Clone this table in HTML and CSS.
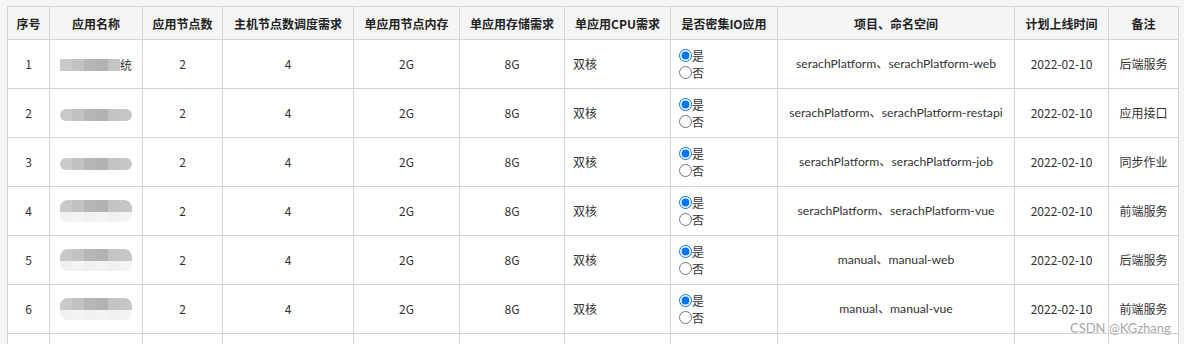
FILE: index.html
```html
<!DOCTYPE html>
<html lang="zh-CN">
<head>
<meta charset="utf-8">
<title>应用部署需求</title>
<link rel="stylesheet" href="styles.css">
</head>
<body>
<div class="page">
  <table class="grid">
    <colgroup>
      <col class="c-no"><col class="c-name"><col class="c-nodes"><col class="c-host"><col class="c-mem"><col class="c-disk"><col class="c-cpu"><col class="c-io"><col class="c-ns"><col class="c-date"><col class="c-note">
    </colgroup>
    <thead>
      <tr>
        <th>序号</th><th>应用名称</th><th>应用节点数</th><th>主机节点数调度需求</th><th>单应用节点内存</th><th>单应用存储需求</th><th>单应用CPU需求</th><th>是否密集IO应用</th><th>项目、命名空间</th><th>计划上线时间</th><th>备注</th>
      </tr>
    </thead>
    <tbody>
      <tr>
        <td>1</td>
        <td><span class="mosaic m1"><i class="a"></i><i class="b"></i><i class="c"></i><i class="d"></i><i class="e"></i></span><span class="tail">统</span></td>
        <td>2</td><td>4</td><td>2G</td><td>8G</td><td class="left">双核</td>
        <td class="left io"><label><input type="radio" name="io1" checked>是</label><label><input type="radio" name="io1">否</label></td>
        <td class="latin">serachPlatform、serachPlatform-web</td><td>2022-02-10</td><td>后端服务</td>
      </tr>
      <tr>
        <td>2</td>
        <td><span class="mosaic"><i class="a"></i><i class="b"></i><i class="c"></i><i class="d"></i><i class="e"></i><i class="f"></i></span></td>
        <td>2</td><td>4</td><td>2G</td><td>8G</td><td class="left">双核</td>
        <td class="left io"><label><input type="radio" name="io2" checked>是</label><label><input type="radio" name="io2">否</label></td>
        <td class="latin">serachPlatform、serachPlatform-restapi</td><td>2022-02-10</td><td>应用接口</td>
      </tr>
      <tr>
        <td>3</td>
        <td><span class="mosaic"><i class="a"></i><i class="b"></i><i class="c"></i><i class="d"></i><i class="e"></i><i class="f"></i></span></td>
        <td>2</td><td>4</td><td>2G</td><td>8G</td><td class="left">双核</td>
        <td class="left io"><label><input type="radio" name="io3" checked>是</label><label><input type="radio" name="io3">否</label></td>
        <td class="latin">serachPlatform、serachPlatform-job</td><td>2022-02-10</td><td>同步作业</td>
      </tr>
      <tr>
        <td>4</td>
        <td><span class="mosaic two"><i class="a"></i><i class="b"></i><i class="c"></i><i class="d"></i><i class="e"></i><i class="f"></i><b></b><b></b><b></b><b></b><b></b><b></b></span></td>
        <td>2</td><td>4</td><td>2G</td><td>8G</td><td class="left">双核</td>
        <td class="left io"><label><input type="radio" name="io4" checked>是</label><label><input type="radio" name="io4">否</label></td>
        <td class="latin">serachPlatform、serachPlatform-vue</td><td>2022-02-10</td><td>前端服务</td>
      </tr>
      <tr>
        <td>5</td>
        <td><span class="mosaic two"><i class="a"></i><i class="b"></i><i class="c"></i><i class="d"></i><i class="e"></i><i class="f"></i><b></b><b></b><b></b><b></b><b></b><b></b></span></td>
        <td>2</td><td>4</td><td>2G</td><td>8G</td><td class="left">双核</td>
        <td class="left io"><label><input type="radio" name="io5" checked>是</label><label><input type="radio" name="io5">否</label></td>
        <td class="latin">manual、manual-web</td><td>2022-02-10</td><td>后端服务</td>
      </tr>
      <tr>
        <td>6</td>
        <td><span class="mosaic two"><i class="a"></i><i class="b"></i><i class="c"></i><i class="d"></i><i class="e"></i><i class="f"></i><b></b><b></b><b></b><b></b><b></b><b></b></span></td>
        <td>2</td><td>4</td><td>2G</td><td>8G</td><td class="left">双核</td>
        <td class="left io"><label><input type="radio" name="io6" checked>是</label><label><input type="radio" name="io6">否</label></td>
        <td class="latin">manual、manual-vue</td><td>2022-02-10</td><td>前端服务</td>
      </tr>
      <tr class="empty">
        <td></td><td></td><td></td><td></td><td></td><td></td><td></td><td></td><td></td><td></td><td></td>
      </tr>
    </tbody>
  </table>
  <div class="watermark">CSDN @KGzhang</div>
</div>
</body>
</html>
```
FILE: styles.css
```css
html, body {
  margin: 0;
  padding: 0;
  background: #f5f5f5;
}

.page {
  position: relative;
  padding: 6px 0 0 7px;
  height: 338px;
  overflow: hidden;
  font-family: "Noto Sans CJK SC", sans-serif;
  font-size: 12px;
  color: #333;
}

.grid {
  border-collapse: collapse;
  table-layout: fixed;
  width: 1171px;
  background: #fff;
}

.c-no { width: 42px; }
.c-name { width: 93px; }
.c-nodes { width: 80px; }
.c-host { width: 131px; }
.c-mem { width: 106px; }
.c-disk { width: 105px; }
.c-cpu { width: 106px; }
.c-io { width: 107px; }
.c-ns { width: 237px; }
.c-date { width: 94px; }
.c-note { width: 70px; }

.grid th,
.grid td {
  border: 1px solid #d4d4d4;
  padding: 0;
  text-align: center;
  vertical-align: middle;
  white-space: nowrap;
  overflow: hidden;
}

.grid th {
  height: 32px;
  background: #f5f5f5;
  font-weight: bold;
  color: #222;
}

.grid td {
  height: 48px;
  line-height: 16px;
}

.grid td.latin {
  font-family: "Lato", "Noto Sans CJK SC", sans-serif;
  font-size: 12.2px;
}

.grid td.left {
  text-align: left;
  padding-left: 8px;
}

.io label {
  display: flex;
  align-items: center;
  height: 17px;
  line-height: 17px;
}

.io input {
  margin: 0;
  width: 13px;
  height: 13px;
}

.mosaic {
  display: inline-grid;
  grid-template-columns: repeat(6, 12px);
  grid-auto-rows: 12px;
  vertical-align: middle;
  border-radius: 6px;
  overflow: hidden;
}

.mosaic.m1 {
  grid-template-columns: repeat(5, 12px);
  border-radius: 0;
}

.mosaic.two {
  grid-template-rows: 12px 10px;
  border-radius: 8px;
}

.mosaic.two b { height: 10px; }

.mosaic i { display: block; }
.mosaic b { display: block; background: #f0f0f0; }
.mosaic b:nth-of-type(even) { background: #f3f3f3; }

.mosaic .a { background: #c9c9c9; }
.mosaic .b { background: #c2c2c2; }
.mosaic .c { background: #b6b6b6; }
.mosaic .d { background: #b2b2b2; }
.mosaic .e { background: #c4c4c4; }
.mosaic .f { background: #c6c6c6; }

.tail {
  vertical-align: middle;
}

.empty td { height: 48px; }

.watermark {
  position: absolute;
  left: 1070px;
  top: 320px;
  font-family: "Lato", sans-serif;
  font-size: 13px;
  line-height: 16px;
  color: #a8a8a8;
  text-shadow: 0 0 2px #fff;
}
```
